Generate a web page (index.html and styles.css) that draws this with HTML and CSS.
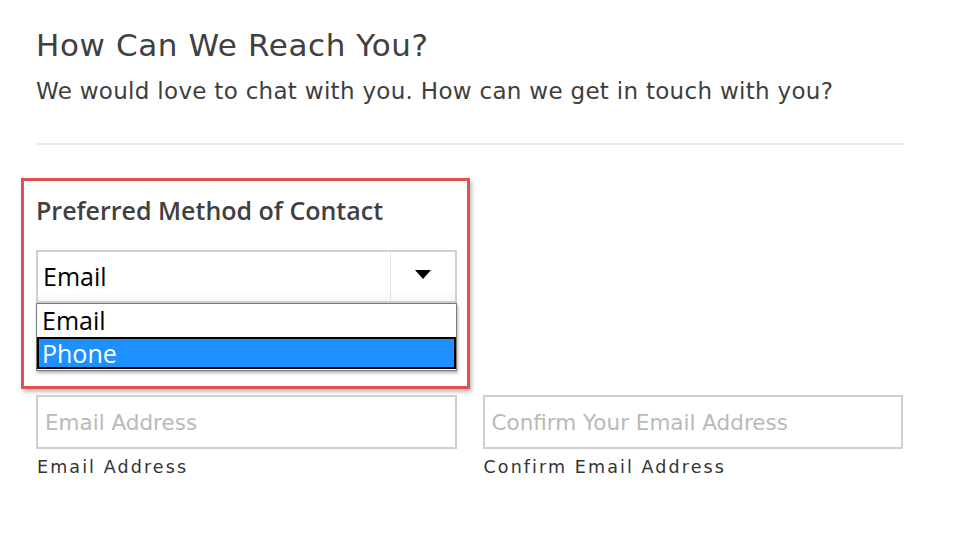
FILE: index.html
```html
<!DOCTYPE html>
<html lang="en">
<head>
<meta charset="utf-8">
<title>How Can We Reach You?</title>
<link rel="stylesheet" href="styles.css">
</head>
<body>
<main class="page">
  <h1 class="title">How Can We Reach You?</h1>
  <p class="lead">We would love to chat with you. How can we get in touch with you?</p>
  <hr class="rule">

  <section class="highlight">
    <h2 class="field-title">Preferred Method of Contact</h2>
    <div class="select-wrap">
      <div class="select">
        <span class="select-value">Email</span>
        <span class="select-arrow">
          <svg width="16" height="9" viewBox="0 0 16 9"><path d="M0 0H16L8 9Z" fill="#000"/></svg>
        </span>
      </div>
      <ul class="options">
        <li class="option">Email</li>
        <li class="option option-active">Phone</li>
      </ul>
    </div>
  </section>

  <div class="row">
    <div class="field">
      <div class="input"><span class="placeholder">Email Address</span></div>
      <span class="label">Email Address</span>
    </div>
    <div class="field">
      <div class="input"><span class="placeholder">Confirm Your Email Address</span></div>
      <span class="label">Confirm Email Address</span>
    </div>
  </div>
</main>
</body>
</html>
```

FILE: styles.css
```css
* { box-sizing: border-box; }
html, body { margin: 0; padding: 0; background: #fff; }
body {
  font-family: "Open Sans", "DejaVu Sans", sans-serif;
  color: #3b3b3b;
}
.page {
  width: 904px;
  padding: 26px 0 0 36px;
}
.title {
  margin: 0;
  font-family: "DejaVu Sans", sans-serif;
  font-weight: normal;
  font-size: 31px;
  line-height: 38px;
  color: #404040;
  letter-spacing: 0.6px;
}
.lead {
  margin: 11px 0 0;
  font-family: "DejaVu Sans", sans-serif;
  font-size: 23px;
  line-height: 32px;
  color: #3e3e3e;
  letter-spacing: 0.3px;
}
.rule {
  margin: 36px 0 0;
  border: 0;
  height: 2px;
  background: #ececec;
}
.highlight {
  margin: 33px 0 0 -15px;
  width: 449px;
  height: 211px;
  border: 3px solid #e34e4e;
  box-shadow: 2px 3px 4px rgba(0,0,0,0.25);
  padding: 12px 0 0 12px;
}
.field-title {
  margin: 0;
  font-family: "Open Sans", sans-serif;
  font-weight: 600;
  font-size: 25px;
  line-height: 34px;
  color: #404040;
}
.select-wrap {
  position: relative;
  margin-top: 23px;
  width: 421px;
}
.select {
  display: flex;
  height: 53px;
  border: 2px solid #d0d0d0;
  background: linear-gradient(#fff, #fff 80%, #f6f6f6);
}
.select-value {
  flex: 1;
  padding: 7px 0 0 5px;
  font-family: "Open Sans", sans-serif;
  font-size: 25px;
  line-height: 34px;
  color: #000;
}
.select-arrow {
  width: 65px;
  border-left: 1px solid #e2e2e2;
  display: flex;
  align-items: center;
  justify-content: center;
  padding-bottom: 4px;
}
.options {
  position: absolute;
  left: 0;
  top: 53px;
  width: 421px;
  margin: 0;
  padding: 1px 0;
  list-style: none;
  background: #fff;
  border: 1px solid #7a7a7a;
  box-shadow: 1px 2px 3px rgba(0,0,0,0.3);
  z-index: 2;
}
.option {
  height: 32px;
  padding: 0 0 0 5px;
  font-family: "Open Sans", sans-serif;
  font-size: 25px;
  line-height: 31px;
  color: #000;
}
.option-active {
  background: #1e90ff;
  color: #fff;
  border: 2px solid #000;
  padding-left: 3px;
  line-height: 28px;
}
.row {
  display: flex;
  gap: 26px;
  margin-top: 6px;
  width: 867px;
}
.field {
  flex: 1;
  display: flex;
  flex-direction: column;
}
.input {
  height: 54px;
  border: 2px solid #cfcfcf;
  padding: 0 0 0 7px;
  display: flex;
  align-items: center;
}
.placeholder {
  font-family: "DejaVu Sans", sans-serif;
  font-size: 21.5px;
  color: #b9b9b9;
}
.label {
  margin-top: 8px;
  padding-left: 1px;
  font-family: "DejaVu Sans", sans-serif;
  font-size: 17.5px;
  letter-spacing: 2.1px;
  color: #333;
}
```
